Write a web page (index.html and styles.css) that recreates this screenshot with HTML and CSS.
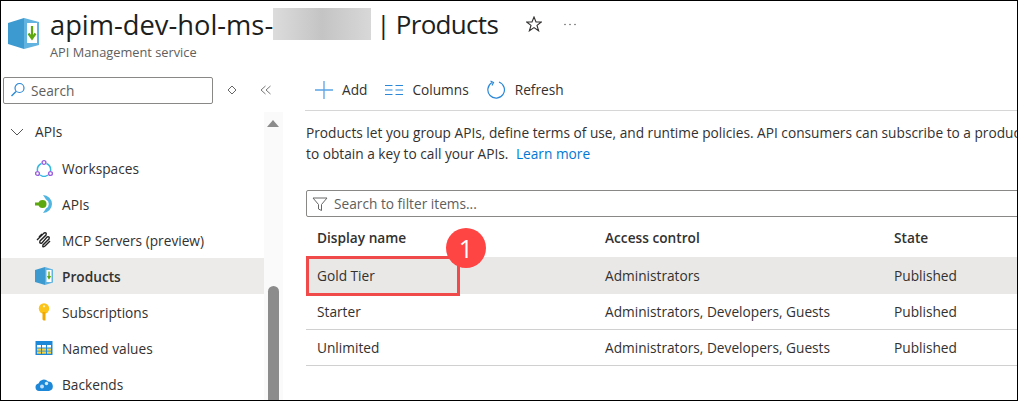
FILE: index.html
```html
<!DOCTYPE html>
<html lang="en">
<head>
    <meta charset="UTF-8">
    <title>Products</title>
    <link rel="stylesheet" href="styles.css">
</head>
<body>
    <header class="page-head">
        <svg class="head-icon" width="31" height="31" viewBox="0 0 31 31">
            <path d="M0 5 L16 0 V31 L0 26 Z" fill="#3c9ad0"/>
            <path d="M16 0 L31 4 V27 L16 31 Z" fill="#62b3e0"/>
            <rect x="19" y="5" width="10" height="20" fill="#fff"/>
            <path d="M24 8 V20 M20.500 15.500 L24 20.500 L27.500 15.500" stroke="#5ea80f" stroke-width="2.200" fill="none"/>
        </svg>
        <div class="head-text">
            <div class="head-title">
                <span>apim-dev-hol-ms-</span><span class="blur"></span><span class="head-page">| Products</span>
                <svg class="star" width="16" height="16" viewBox="0 0 16 16"><path d="M8 1 L10 6 H15.300 L11 9.400 L12.600 14.800 L8 11.600 L3.400 14.800 L5 9.400 L0.700 6 H6 Z" fill="none" stroke="#323130" stroke-width="1.100"/></svg>
                <svg class="dots" width="12" height="3" viewBox="0 0 12 3"><circle cx="1" cy="1.500" r="0.800" fill="#666"/><circle cx="6" cy="1.500" r="0.800" fill="#666"/><circle cx="11" cy="1.500" r="0.800" fill="#666"/></svg>
            </div>
            <div class="head-sub">API Management service</div>
        </div>
    </header>
    <div class="main">
        <aside class="side">
            <div class="side-top">
                <div class="side-search">
                    <svg width="16" height="16" viewBox="0 0 16 16"><circle cx="9.500" cy="6" r="4.500" fill="none" stroke="#2b88d8" stroke-width="1.200"/><path d="M6 9.500 L1.500 14" stroke="#2b88d8" stroke-width="1.400"/></svg>
                    <span>Search</span>
                </div>
                <svg class="side-btn" width="10" height="10" viewBox="0 0 10 10"><path d="M5 1 L9 5 L5 9 L1 5 Z" fill="none" stroke="#666"/></svg>
                <svg class="side-btn collapse" width="12" height="10" viewBox="0 0 12 10"><path d="M5.500 1 L1 5 L5.500 9 M10.500 1 L6 5 L10.500 9" fill="none" stroke="#777"/></svg>
            </div>
            <div class="side-body">
                <nav class="nav">
                    <div class="nav-group">
                        <svg width="14" height="8" viewBox="0 0 14 8"><path d="M1 1 L7 7 L13 1" fill="none" stroke="#555"/></svg>
                        <span>APIs</span>
                    </div>
                    <div class="nav-item">
                        <svg width="18" height="18" viewBox="0 0 18 18"><path d="M6.500 4.500 A7 7 0 0 0 2.500 12 M15.500 12 A7 7 0 0 0 11.500 4.500 M5 16 A7 7 0 0 0 13 16" fill="none" stroke="#35b8e0" stroke-width="1.500"/><circle cx="9" cy="3.500" r="1.900" fill="#fff" stroke="#9a5fe0" stroke-width="1.400"/><circle cx="2.500" cy="14.500" r="1.900" fill="#fff" stroke="#9a5fe0" stroke-width="1.400"/><circle cx="15.500" cy="14.500" r="1.900" fill="#fff" stroke="#9a5fe0" stroke-width="1.400"/></svg>
                        <span>Workspaces</span>
                    </div>
                    <div class="nav-item">
                        <svg width="18" height="18" viewBox="0 0 18 18"><path d="M8 0 A9 9 0 0 1 8 18 L11 13.500 A5 5 0 0 0 11 4.500 Z" fill="#50b5e0"/><rect x="0" y="7.500" width="6" height="3" fill="#5ea80f"/><circle cx="7.500" cy="9" r="4" fill="#5ea80f"/></svg>
                        <span>APIs</span>
                    </div>
                    <div class="nav-item">
                        <svg width="18" height="18" viewBox="0 0 18 18"><path d="M2 9 L9 2 Q12 1 11 4 L5 10 Q4 13 7 12 L12 6 Q15 5 14 8 L8 14 Q7 17 10 15 L15 10" fill="none" stroke="#222" stroke-width="1.400"/><path d="M4 6 L7 3" stroke="#222" stroke-width="1.400"/></svg>
                        <span>MCP Servers (preview)</span>
                    </div>
                    <div class="nav-item active">
                        <svg width="18" height="18" viewBox="0 0 18 18"><path d="M0 3 L10 0 V18 L0 15 Z" fill="#3c9ad0"/><path d="M10 0 L18 2.500 V15.500 L10 18 Z" fill="#62b3e0"/><rect x="11.500" y="3" width="5" height="12" fill="#fff"/><path d="M14 4.500 V11 M12.500 9 L14 11.500 L15.500 9" stroke="#5ea80f" stroke-width="1.300" fill="none"/></svg>
                        <span>Products</span>
                    </div>
                    <div class="nav-item">
                        <svg width="18" height="18" viewBox="0 0 18 18"><circle cx="9" cy="5.500" r="5.200" fill="#fcc419"/><path d="M7.500 9 H10.500 V17.500 H8.500 L7.500 16.500 Z" fill="#f0a800"/><circle cx="9" cy="3.300" r="1.100" fill="#fff3bf"/></svg>
                        <span>Subscriptions</span>
                    </div>
                    <div class="nav-item">
                        <svg width="18" height="18" viewBox="0 0 18 18"><rect x="0.500" y="2" width="17" height="14" fill="#1e88d8"/><rect x="2" y="6" width="4" height="2.500" fill="#fff"/><rect x="7" y="6" width="4" height="2.500" fill="#fff"/><rect x="12" y="6" width="4" height="2.500" fill="#fff"/><rect x="2" y="9.500" width="4" height="2.200" fill="#f5d547"/><rect x="7" y="9.500" width="4" height="2.200" fill="#f5d547"/><rect x="12" y="9.500" width="4" height="2.200" fill="#f5d547"/><rect x="2" y="12.500" width="4" height="2.200" fill="#f5d547"/><rect x="7" y="12.500" width="4" height="2.200" fill="#f5d547"/><rect x="12" y="12.500" width="4" height="2.200" fill="#f5d547"/></svg>
                        <span>Named values</span>
                    </div>
                    <div class="nav-item">
                        <svg width="18" height="18" viewBox="0 0 18 18"><path d="M4 16 A3.800 3.800 0 0 1 3.500 8.500 A5.500 5.500 0 0 1 13 6.500 A4.800 4.800 0 0 1 14 16 Z" fill="#1e88d8"/><circle cx="7" cy="11.500" r="2" fill="#bfe0f7"/><circle cx="11.500" cy="8.500" r="1.700" fill="#d5ecfb"/></svg>
                        <span>Backends</span>
                    </div>
                </nav>
                <div class="side-scroll">
                    <div class="scroll-arrow"></div>
                    <div class="scroll-thumb"></div>
                </div>
            </div>
        </aside>
        <section class="content">
            <div class="toolbar">
                <div class="tool">
                    <svg width="18" height="18" viewBox="0 0 18 18"><path d="M9 0 V18 M0 9 H18" stroke="#5ba4e6" stroke-width="1.300"/></svg>
                    <span>Add</span>
                </div>
                <div class="tool">
                    <svg width="18" height="12" viewBox="0 0 18 12"><path d="M0 1.500 H7.500 M10.500 1.500 H18 M0 6 H7.500 M10.500 6 H18 M0 10.500 H7.500 M10.500 10.500 H18" stroke="#2b88d8" stroke-width="1.100"/></svg>
                    <span>Columns</span>
                </div>
                <div class="tool">
                    <svg width="19" height="19" viewBox="0 0 19 19"><path d="M12 2 A8.300 8.300 0 1 1 5 2.600" fill="none" stroke="#2b88d8" stroke-width="1.200"/><path d="M3.500 1 L6.500 2.500 L5 5.500" fill="none" stroke="#2b88d8" stroke-width="1.200"/></svg>
                    <span>Refresh</span>
                </div>
            </div>
            <p class="intro">Products let you group APIs, define terms of use, and runtime policies. API consumers can subscribe to a product to obtain a key to call your APIs. <a href="#">Learn more</a></p>
            <div class="filter">
                <svg width="16" height="16" viewBox="0 0 16 16"><path d="M1 2 H15 L9.500 8.500 V14.500 L6.500 13 V8.500 Z" fill="none" stroke="#666"/></svg>
                <span>Search to filter items...</span>
            </div>
            <table class="grid">
                <thead>
                    <tr><th class="col-name">Display name</th><th class="col-access">Access control</th><th>State</th></tr>
                </thead>
                <tbody>
                    <tr class="selected">
                        <td class="name-cell">Gold Tier
                            <div class="callout-box"></div>
                            <div class="callout-num">1</div>
                        </td>
                        <td>Administrators</td><td>Published</td>
                    </tr>
                    <tr><td>Starter</td><td>Administrators, Developers, Guests</td><td>Published</td></tr>
                    <tr><td>Unlimited</td><td>Administrators, Developers, Guests</td><td>Published</td></tr>
                </tbody>
            </table>
        </section>
    </div>
</body>
</html>
```

FILE: styles.css
```css
* {
    box-sizing: border-box;
}

html, body {
    height: 100%;
}

body {
    margin: 0;
    overflow: hidden;
    background-color: #ffffff;
    color: #323130;
    border: 1px solid #000000;
    font-family: "Open Sans", "Noto Sans", sans-serif;
    font-size: 13.700px;
}

svg {
    flex: none;
}

.page-head {
    display: flex;
    gap: 11px;
    height: 72px;
    padding: 7px 0 0 7px;
}

.head-icon {
    margin-top: 10px;
}

.head-title {
    display: flex;
    align-items: center;
    height: 32px;
    font-size: 27.300px;
    color: #201f1e;
    white-space: nowrap;
}

.head-page {
    font-size: 26px;
    letter-spacing: -0.700px;
}

.blur {
    width: 98px;
    height: 32px;
    margin-right: 5px;
    background: linear-gradient(90deg, #dcdcdc, #c4c4c4 50%, #d8d8d8);
}

.star {
    margin-left: 28px;
}

.dots {
    margin-left: 22px;
}

.head-sub {
    margin-top: 3px;
    font-size: 12.800px;
    color: #605e5c;
}

.main {
    display: flex;
    height: 327px;
}

.side {
    width: 282px;
    flex: none;
}

.side-top {
    display: flex;
    align-items: center;
    height: 34px;
    padding: 0 0 0 2px;
}

.side-search {
    display: flex;
    align-items: center;
    gap: 5px;
    width: 210px;
    height: 27px;
    padding-left: 6px;
    border: 1px solid #8a8886;
    border-radius: 2px;
    color: #605e5c;
}

.side-btn {
    margin-left: 14px;
}

.side-btn.collapse {
    margin-left: 23px;
}

.side-body {
    display: flex;
    height: 288px;
    margin-top: 5px;
}

.nav {
    width: 263px;
    padding-top: 1px;
}

.nav-group {
    display: flex;
    align-items: center;
    gap: 11px;
    height: 37px;
    padding-left: 9px;
}

.nav-item {
    display: flex;
    align-items: center;
    gap: 9px;
    height: 36px;
    padding-left: 34px;
    white-space: nowrap;
}

.nav-item.active {
    background-color: #edebe9;
    font-weight: 600;
}

.side-scroll {
    width: 19px;
    background-color: #fafafa;
    padding-top: 8px;
}

.scroll-arrow {
    width: 0;
    margin-left: 3px;
    border: solid transparent;
    border-width: 0 6px 7px;
    border-bottom-color: #8c8c8c;
}

.scroll-thumb {
    width: 11px;
    height: 114px;
    margin: 159px 0 0 4px;
    background-color: #8c8c8c;
    border-radius: 6px 6px 0 0;
}

.content {
    flex: 1;
    min-width: 0;
    padding-left: 23px;
    overflow: hidden;
}

.toolbar {
    display: flex;
    align-items: center;
    gap: 18px;
    height: 38px;
    margin-left: -1px;
    padding: 0 0 4px 10px;
    border-bottom: 1px solid #d6d6d6;
}

.tool {
    display: flex;
    align-items: center;
    gap: 9px;
}

.intro {
    width: 730px;
    margin: 11px 0 0;
    line-height: 21px;
    color: #323130;
}

.intro a {
    margin-left: 4px;
    color: #0078d4;
    text-decoration: none;
}

.filter {
    display: flex;
    align-items: center;
    gap: 6px;
    width: 730px;
    height: 27px;
    margin-top: 26px;
    padding-left: 5px;
    border: 1px solid #8a8886;
    border-radius: 2px;
    color: #605e5c;
}

.grid {
    width: 730px;
    margin-top: 3px;
    border-collapse: separate;
    border-spacing: 0;
    table-layout: fixed;
}

.grid th {
    height: 37px;
    padding: 0 0 2px 11px;
    text-align: left;
    font-weight: 600;
}

.grid td {
    height: 36px;
    padding: 0 0 0 11px;
    border-bottom: 1px solid #d0d0d0;
}

.col-name {
    width: 288px;
}

.col-access {
    width: 289px;
}

.selected td {
    height: 37px;
    background-color: #e9e8e7;
    border-bottom: none;
}

.name-cell {
    position: relative;
}

.callout-box {
    position: absolute;
    left: 0;
    top: -1px;
    width: 154px;
    height: 40px;
    border: 3px solid #f04a4a;
}

.callout-num {
    position: absolute;
    left: 140px;
    top: -29px;
    width: 40px;
    height: 40px;
    border-radius: 50%;
    background-color: #ff4444;
    color: #ffffff;
    font-size: 25px;
    line-height: 40px;
    text-align: center;
}
```
